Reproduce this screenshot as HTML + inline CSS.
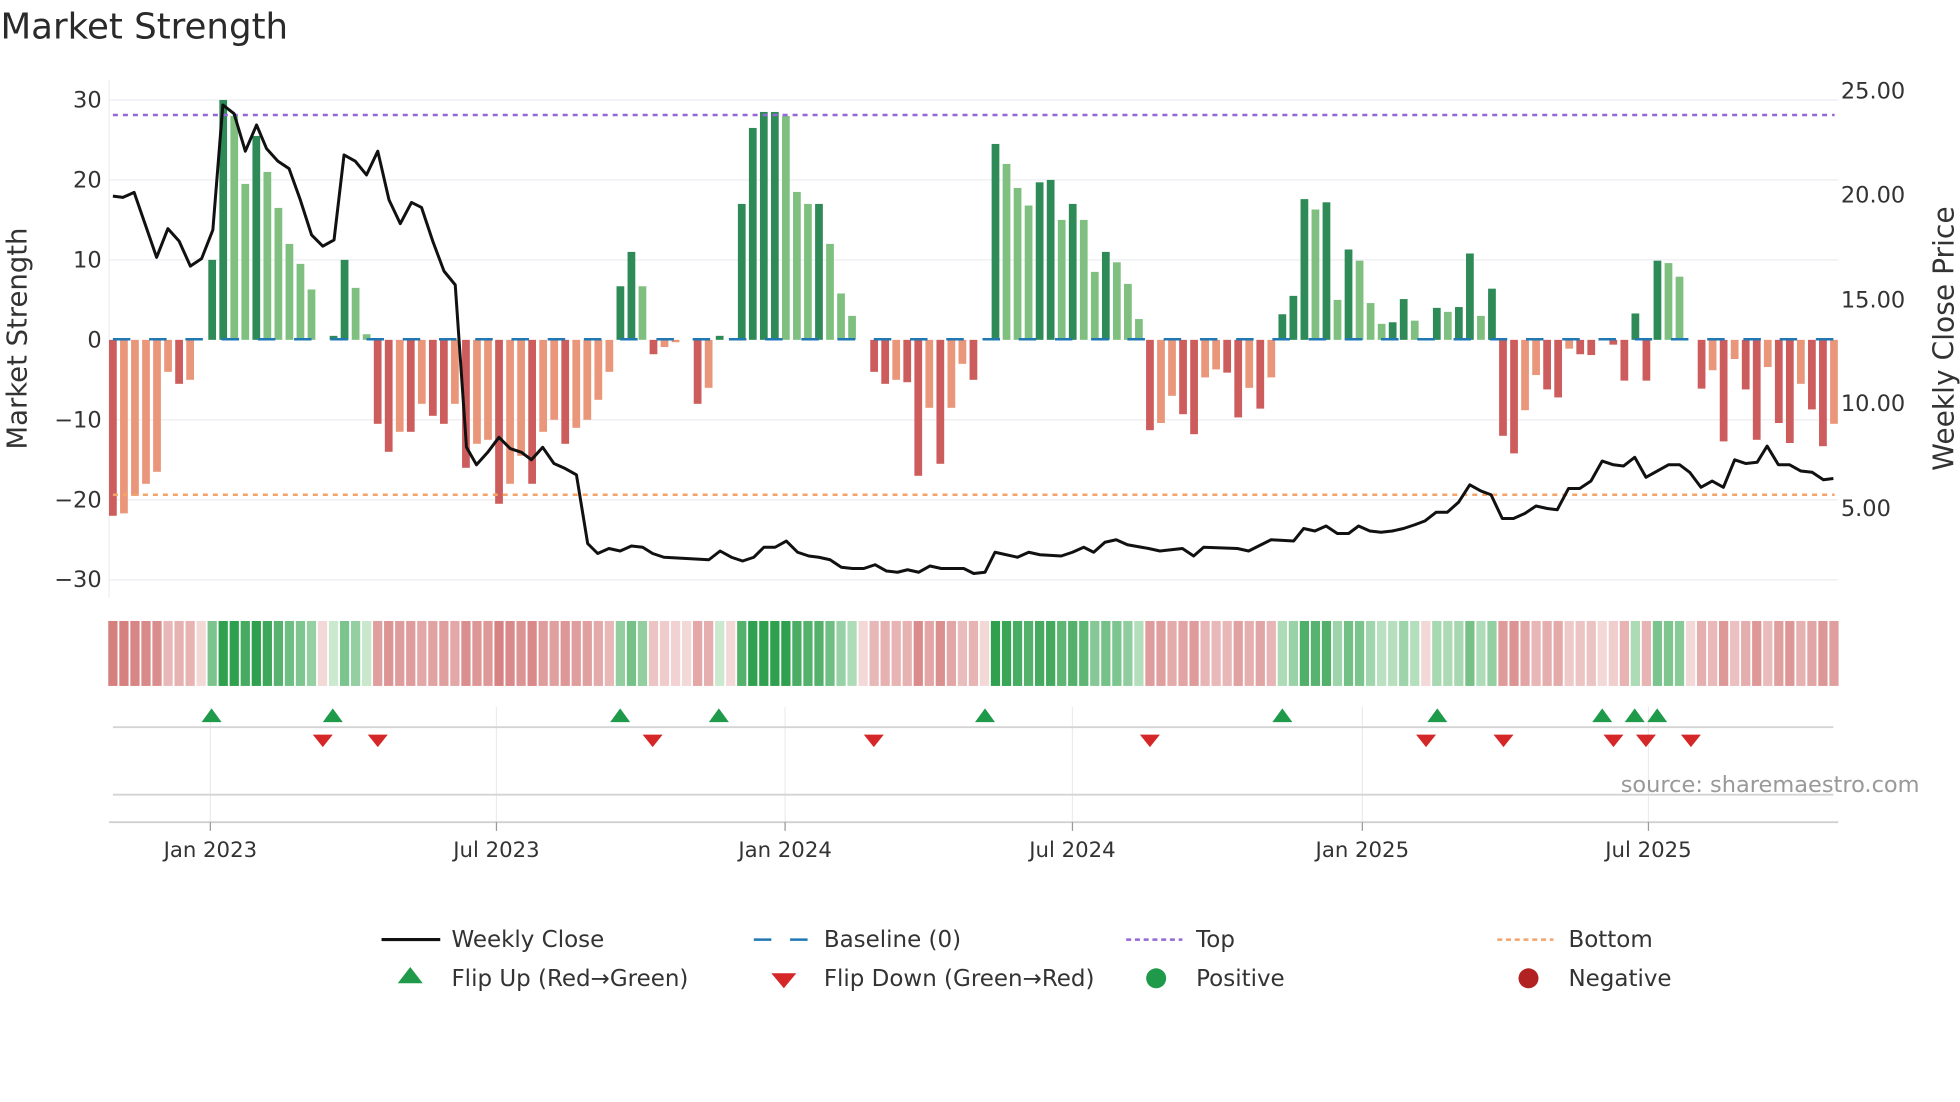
<!DOCTYPE html>
<html><head><meta charset="utf-8"><style>
html,body{margin:0;padding:0;background:#fff;}
svg{display:block;font-family:"DejaVu Sans","Liberation Sans",sans-serif;}
</style></head><body>
<svg id="s" width="1960" height="1102" viewBox="0 0 1568 882" xmlns="http://www.w3.org/2000/svg">
<rect width="1568" height="882" fill="#fff"/>
<text x="0" y="31" font-size="28.5" fill="#2a2a2a">Market Strength</text>
<g stroke="#eceef2" stroke-width="1">
<line x1="87" x2="1471" y1="80" y2="80"/><line x1="87" x2="1471" y1="144" y2="144"/><line x1="87" x2="1471" y1="208" y2="208"/><line x1="87" x2="1471" y1="336" y2="336"/><line x1="87" x2="1471" y1="400" y2="400"/><line x1="87" x2="1471" y1="464" y2="464"/>
<line x1="87" x2="87" y1="64" y2="478"/>
</g>
<g font-size="18" fill="#333" text-anchor="end">
<text x="81" y="86">30</text><text x="81" y="150">20</text><text x="81" y="214">10</text><text x="81" y="278">0</text><text x="81" y="342">−10</text><text x="81" y="406">−20</text><text x="81" y="470">−30</text>
</g>
<g font-size="18" fill="#333">
<text x="1473" y="79">25.00</text><text x="1473" y="162">20.00</text><text x="1473" y="246">15.00</text><text x="1473" y="329">10.00</text><text x="1473" y="413">5.00</text>
</g>
<text transform="translate(21,271) rotate(-90)" font-size="22" fill="#333" text-anchor="middle">Market Strength</text>
<text transform="translate(1563,271) rotate(-90)" font-size="22.5" fill="#333" text-anchor="middle">Weekly Close Price</text>
<g id="bars"></g>
<line x1="90" x2="1468" y1="271.5" y2="271.5" stroke="#1f77b4" stroke-width="2" stroke-dasharray="14 15"/>
<line x1="90" x2="1468" y1="92" y2="92" stroke="#9467d6" stroke-width="2" stroke-dasharray="4 4"/>
<line x1="90" x2="1468" y1="396" y2="396" stroke="#f4a46a" stroke-width="2" stroke-dasharray="4 4"/>
<polyline id="price" fill="none" stroke="#111" stroke-width="2.4" stroke-linejoin="round"/>
<g id="strip"></g>
<g stroke="#ececec" stroke-width="1">
<line x1="168" x2="168" y1="566" y2="658"/><line x1="397" x2="397" y1="566" y2="658"/><line x1="628" x2="628" y1="566" y2="658"/><line x1="858" x2="858" y1="566" y2="658"/><line x1="1090" x2="1090" y1="566" y2="658"/><line x1="1319" x2="1319" y1="566" y2="658"/>
</g>
<line x1="90" x2="1467" y1="582" y2="582" stroke="#d4d4d4" stroke-width="1.5"/>
<line x1="90" x2="1467" y1="636" y2="636" stroke="#d4d4d4" stroke-width="1.5"/>
<line x1="87" x2="1471" y1="658" y2="658" stroke="#d0d0d0" stroke-width="1.5"/>
<g stroke="#999" stroke-width="1"><line x1="168" x2="168" y1="658" y2="665"/><line x1="397" x2="397" y1="658" y2="665"/><line x1="628" x2="628" y1="658" y2="665"/><line x1="858" x2="858" y1="658" y2="665"/><line x1="1090" x2="1090" y1="658" y2="665"/><line x1="1319" x2="1319" y1="658" y2="665"/></g>
<g id="marks"></g>
<g font-size="17" fill="#333" text-anchor="middle">
<text x="168" y="686">Jan 2023</text><text x="397" y="686">Jul 2023</text><text x="628" y="686">Jan 2024</text><text x="858" y="686">Jul 2024</text><text x="1090" y="686">Jan 2025</text><text x="1319" y="686">Jul 2025</text>
</g>
<text x="1536" y="634" font-size="18" fill="#999" text-anchor="end">source: sharemaestro.com</text>
<g font-size="18.4" fill="#333">
<line x1="305" x2="352" y1="752" y2="752" stroke="#111" stroke-width="2.5"/><text x="361" y="758">Weekly Close</text>
<line x1="603" x2="648" y1="752" y2="752" stroke="#1f77b4" stroke-width="2" stroke-dasharray="14 15"/><text x="659" y="758">Baseline (0)</text>
<line x1="901" x2="946" y1="752" y2="752" stroke="#9467d6" stroke-width="2" stroke-dasharray="4 3"/><text x="957" y="758">Top</text>
<line x1="1198" x2="1243" y1="752" y2="752" stroke="#f4a46a" stroke-width="2" stroke-dasharray="4 3"/><text x="1255" y="758">Bottom</text>
<polygon points="328,774 338,787 318,787" fill="#1e9a4a"/><text x="361" y="789">Flip Up (Red→Green)</text>
<polygon points="617,779 637,779 627,791" fill="#d62728"/><text x="659" y="789">Flip Down (Green→Red)</text>
<circle cx="925" cy="783" r="8" fill="#1e9a4a"/><text x="957" y="789">Positive</text>
<circle cx="1223" cy="783" r="8" fill="#b22222"/><text x="1255" y="789">Negative</text>
</g>
</svg>
<script>
var NS="http://www.w3.org/2000/svg";
var D="#2e8b57",L="#7fc080",R="#cd5c5c",S="#e9967a";
var v=[[-22,R],[-21.7,S],[-19.5,S],[-18,S],[-16.5,S],[-4,S],[-5.5,R],[-5,S],[0,0],[10,D],[30,D],[28,L],[19.5,L],[25.5,D],[21,L],[16.5,L],[12,L],[9.5,L],[6.3,L],[0,0],[0.5,D],[10,D],[6.5,L],[0.7,L],[-10.5,R],[-14,R],[-11.5,S],[-11.5,R],[-8,S],[-9.5,R],[-10.5,R],[-8,S],[-16,R],[-13,S],[-12.5,S],[-20.5,R],[-18,S],[-14.5,S],[-18,R],[-11.5,S],[-10,S],[-13,R],[-11,S],[-10,S],[-7.5,S],[-4,S],[6.7,D],[11,D],[6.7,L],[-1.8,R],[-0.9,S],[-0.3,S],[0,0],[-8,R],[-6,S],[0.5,D],[0,0],[17,D],[26.5,D],[28.5,D],[28.5,D],[28,L],[18.5,L],[17,L],[17,D],[12,L],[5.8,L],[3,L],[0,0],[-4,R],[-5.5,R],[-5,S],[-5.3,R],[-17,R],[-8.5,S],[-15.5,R],[-8.5,S],[-3,S],[-5,R],[0,0],
[24.5,D],[22,L],[19,L],[16.8,L],[19.7,D],[20,D],[15,L],[17,D],[15,L],[8.5,L],[11,D],[9.7,L],[7,L],[2.6,L],
[-11.3,R],[-10.4,S],[-7,S],[-9.3,R],[-11.8,R],[-4.7,S],[-3.7,S],[-4.1,R],[-9.7,R],[-6,S],[-8.6,R],[-4.7,S],
[3.2,D],[5.5,D],[17.6,D],[16.3,L],[17.2,D],[5,L],[11.3,D],[9.9,L],[4.6,L],[2,L],[2.2,D],[5.1,D],[2.4,L],[0,0],[4,D],[3.5,L],[4.1,D],[10.8,D],[3,L],[6.4,D],
[-12,R],[-14.2,R],[-8.8,S],[-4.4,S],[-6.2,R],[-7.2,R],[-1.1,S],[-1.8,R],[-1.9,R],[0,0],[-0.6,R],[-5.1,R],
[3.3,D],[-5.1,R],[9.9,D],[9.6,L],[7.9,L],[0,0],
[-6.1,R],[-3.8,S],[-12.7,R],[-2.4,S],[-6.2,R],[-12.5,R],[-3.4,S],[-10.4,R],[-12.9,R],[-5.5,S],[-8.7,R],[-13.3,R],[-10.5,S]];
var bars=document.getElementById("bars"),strip=document.getElementById("strip");
function mix(a,b,t){var r="#";for(var i=0;i<3;i++){var x=parseInt(a.substr(1+2*i,2),16),y=parseInt(b.substr(1+2*i,2),16);var z=Math.round(x+(y-x)*t).toString(16);r+=(z.length<2?"0":"")+z;}return r;}
for(var i=0;i<v.length;i++){
 var x=90+i*8.83,val=v[i][0];
 if(val!==0){var r=document.createElementNS(NS,"rect");var h=Math.abs(val)*6.4;
 r.setAttribute("x",x-3.1);r.setAttribute("width",6.2);r.setAttribute("y",val>0?272-h:272);r.setAttribute("height",h);r.setAttribute("fill",v[i][1]);bars.appendChild(r);}
 var c,t=Math.min(1,Math.abs(val)/24);
 if(val>0)c=mix("#d6eed8","#2fa04e",Math.pow(t,0.7));else c=mix("#f3d8d8","#d47a7a",Math.pow(t,0.6));
 var s=document.createElementNS(NS,"rect");s.setAttribute("x",x-4.4+0.7);s.setAttribute("width",7.4);s.setAttribute("y",497);s.setAttribute("height",52);s.setAttribute("fill",c);strip.appendChild(s);
}
var p=[[90,157],[98,158],[107,154],[116,180],[125,206],[134,183],[143,193],[152,213],[161,207],[170,184],[178,84],[187,91],[196,121],[205,100],[213,119],[222,129],[231,135],[240,160],[249,188],[258,197],[267,192],[275,124],[284,129],[293,140],[302,121],[311,160],[320,179],[329,162],[337,166],[346,193],[355,217],[364,228],[373,358],[381,372],[390,362],[399,350],[408,359],[417,362],[425,368],[434,358],[443,371],[452,375],[461,380],[470,435],[478,443],[487,439],[496,441],[505,437],[514,438],[522,443],[531,446],[549,447],[567,448],[576,441],[585,446],[594,449],[603,446],[611,438],[620,438],[629,433],[638,442],[647,445],[655,446],[664,448],[673,454],[682,455],[691,455],[700,452],[709,457],[718,458],[726,456],[735,458],[744,453],[753,455],[771,455],[779,459],[788,458],[796,442],[814,446],[823,442],[832,444],[849,445],[858,442],[867,438],[875,442],[884,434],[893,432],[902,436],[919,439],[928,441],[946,439],[955,445],[963,438],[990,439],[999,441],[1017,432],[1035,433],[1043,423],[1052,425],[1061,421],[1070,427],[1079,427],[1087,421],[1096,425],[1105,426],[1114,425],[1123,423],[1132,420],[1140,417],[1149,410],[1158,410],[1167,402],[1176,388],[1185,393],[1193,396],[1202,415],[1211,415],[1220,411],[1229,405],[1238,407],[1246,408],[1255,391],[1264,391],[1273,385],[1282,369],[1291,372],[1299,373],[1308,366],[1317,382],[1326,377],[1335,372],[1344,372],[1352,378],[1361,390],[1370,385],[1379,390],[1388,368],[1397,371],[1406,370],[1414,357],[1423,372],[1432,372],[1441,377],[1450,378],[1459,384],[1467,383]];
document.getElementById("price").setAttribute("points",p.map(function(a){return a.join(",")}).join(" "));
var m=document.getElementById("marks");
[169,266,496,575,788,1026,1150,1282,1308,1326].forEach(function(x){var g=document.createElementNS(NS,"polygon");g.setAttribute("points",(x)+",567 "+(x+8)+",578 "+(x-8)+",578");g.setAttribute("fill","#1e9a4a");m.appendChild(g);});
[258,302,522,699,920,1141,1203,1291,1317,1353].forEach(function(x){var g=document.createElementNS(NS,"polygon");g.setAttribute("points",(x-8)+",588 "+(x+8)+",588 "+x+",598");g.setAttribute("fill","#d62728");m.appendChild(g);});
</script>
</body></html>
